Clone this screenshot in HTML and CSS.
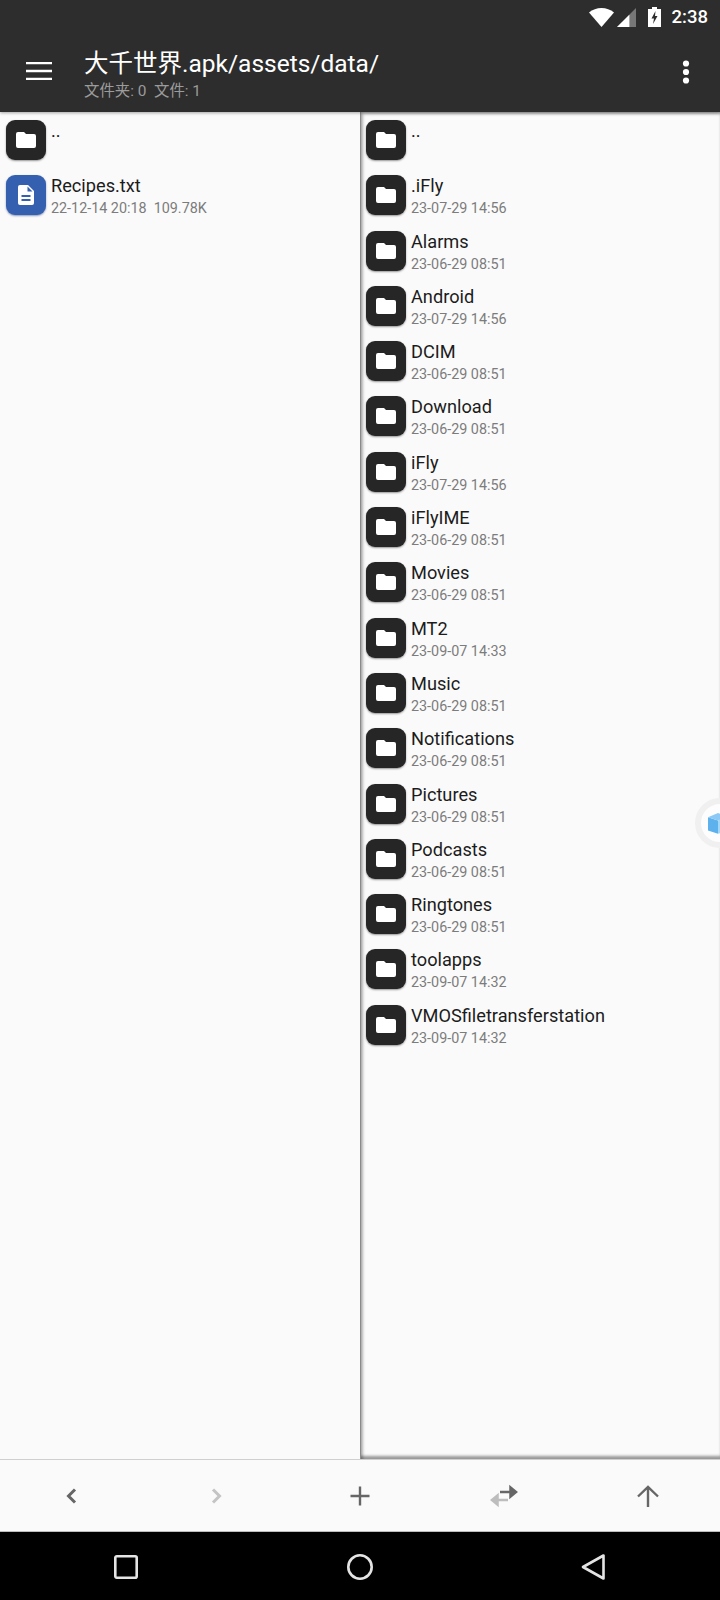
FILE: index.html
```html
<!DOCTYPE html>
<html lang="zh">
<head>
<meta charset="utf-8">
<title>大千世界.apk/assets/data/</title>
<link rel="stylesheet" href="styles.css">
</head>
<body>
<svg class="defs" width="0" height="0" aria-hidden="true">
  <symbol id="folder" viewBox="0 0 20 16"><path d="M2 0h6l2 2h8a2 2 0 0 1 2 2v10a2 2 0 0 1-2 2H2a2 2 0 0 1-2-2V2a2 2 0 0 1 2-2z"/></symbol>
</svg>
<div class="app">
  <header class="topbar">
    <div class="status">
      <svg class="st-wifi" viewBox="0 0 25 19"><path d="M12.500 19 0 4.500C3.500 1.600 7.800 0 12.500 0s9 1.600 12.500 4.500z" fill="#fff"/></svg>
      <svg class="st-signal" viewBox="0 0 20 20"><path d="M0 20 20 0v20z" fill="#777"/><path d="M0 20 13 7v13z" fill="#fff"/></svg>
      <svg class="st-batt" viewBox="0 0 13 20"><path d="M4 0h5v2h4v18H0V2h4z" fill="#fff"/><path d="M7.500 4 3.500 11.500h2.500L5 17l4.500-8H7z" fill="#2d2d2d"/></svg>
      <span class="st-time">2:38</span>
    </div>
    <div class="toolbar">
      <svg class="menu" viewBox="0 0 26 18"><path d="M0 1h26M0 9h26M0 17h26" stroke="#fff" stroke-width="2.400" fill="none"/></svg>
      <div class="titles">
        <div class="title">大千世界.apk/assets/data/</div>
        <div class="subtitle">文件夹: 0&nbsp; 文件: 1</div>
      </div>
      <svg class="more" viewBox="0 0 8 24"><circle cx="4" cy="3.500" r="3.100" fill="#fff"/><circle cx="4" cy="12" r="3.100" fill="#fff"/><circle cx="4" cy="20.500" r="3.100" fill="#fff"/></svg>
    </div>
  </header>

  <main class="panes">
    <section class="pane pane-left">
      <div class="row"><span class="tile"><svg class="fold"><use href="#folder"/></svg></span><div class="info"><div class="name">..</div></div></div>
      <div class="row"><span class="tile tile-doc"><svg class="doc" viewBox="0 0 16 20"><path d="M2 0h8l6 6v12a2 2 0 0 1-2 2H2a2 2 0 0 1-2-2V2a2 2 0 0 1 2-2z" fill="#fff"/><path d="M9.500 1.500v5h5z" fill="#3560b0"/><path d="M3.500 11h9M3.500 15h9" stroke="#3560b0" stroke-width="1.800"/></svg></span><div class="info"><div class="name">Recipes.txt</div><div class="meta">22-12-14 20:18&nbsp; 109.78K</div></div></div>
    </section>
    <section class="pane pane-right">
      <div class="row"><span class="tile"><svg class="fold"><use href="#folder"/></svg></span><div class="info"><div class="name">..</div></div></div>
      <div class="row"><span class="tile"><svg class="fold"><use href="#folder"/></svg></span><div class="info"><div class="name">.iFly</div><div class="meta">23-07-29 14:56</div></div></div>
      <div class="row"><span class="tile"><svg class="fold"><use href="#folder"/></svg></span><div class="info"><div class="name">Alarms</div><div class="meta">23-06-29 08:51</div></div></div>
      <div class="row"><span class="tile"><svg class="fold"><use href="#folder"/></svg></span><div class="info"><div class="name">Android</div><div class="meta">23-07-29 14:56</div></div></div>
      <div class="row"><span class="tile"><svg class="fold"><use href="#folder"/></svg></span><div class="info"><div class="name">DCIM</div><div class="meta">23-06-29 08:51</div></div></div>
      <div class="row"><span class="tile"><svg class="fold"><use href="#folder"/></svg></span><div class="info"><div class="name">Download</div><div class="meta">23-06-29 08:51</div></div></div>
      <div class="row"><span class="tile"><svg class="fold"><use href="#folder"/></svg></span><div class="info"><div class="name">iFly</div><div class="meta">23-07-29 14:56</div></div></div>
      <div class="row"><span class="tile"><svg class="fold"><use href="#folder"/></svg></span><div class="info"><div class="name">iFlyIME</div><div class="meta">23-06-29 08:51</div></div></div>
      <div class="row"><span class="tile"><svg class="fold"><use href="#folder"/></svg></span><div class="info"><div class="name">Movies</div><div class="meta">23-06-29 08:51</div></div></div>
      <div class="row"><span class="tile"><svg class="fold"><use href="#folder"/></svg></span><div class="info"><div class="name">MT2</div><div class="meta">23-09-07 14:33</div></div></div>
      <div class="row"><span class="tile"><svg class="fold"><use href="#folder"/></svg></span><div class="info"><div class="name">Music</div><div class="meta">23-06-29 08:51</div></div></div>
      <div class="row"><span class="tile"><svg class="fold"><use href="#folder"/></svg></span><div class="info"><div class="name">Notifications</div><div class="meta">23-06-29 08:51</div></div></div>
      <div class="row"><span class="tile"><svg class="fold"><use href="#folder"/></svg></span><div class="info"><div class="name">Pictures</div><div class="meta">23-06-29 08:51</div></div></div>
      <div class="row"><span class="tile"><svg class="fold"><use href="#folder"/></svg></span><div class="info"><div class="name">Podcasts</div><div class="meta">23-06-29 08:51</div></div></div>
      <div class="row"><span class="tile"><svg class="fold"><use href="#folder"/></svg></span><div class="info"><div class="name">Ringtones</div><div class="meta">23-06-29 08:51</div></div></div>
      <div class="row"><span class="tile"><svg class="fold"><use href="#folder"/></svg></span><div class="info"><div class="name">toolapps</div><div class="meta">23-09-07 14:32</div></div></div>
      <div class="row"><span class="tile"><svg class="fold"><use href="#folder"/></svg></span><div class="info"><div class="name">VMOSfiletransferstation</div><div class="meta">23-09-07 14:32</div></div></div>
    </section>
    <div class="float-ball">
      <svg class="cube" viewBox="0 0 24 26"><path d="M0 6 12 10v16L0 22z" fill="#5db2ee"/><path d="M12 10 24 6v16l-12 4z" fill="#a5d8f8"/><path d="M0 6 12 1l12 5-12 4z" fill="#8ccaf5"/></svg>
    </div>
  </main>

  <nav class="actions">
    <span class="act"><svg viewBox="0 0 24 24"><path d="M15 5.500 8.500 12l6.500 6.500" class="ico"/></svg></span>
    <span class="act"><svg viewBox="0 0 24 24"><path d="M9 5.500 15.500 12 9 18.500" class="ico dim"/></svg></span>
    <span class="act"><svg viewBox="0 0 24 24"><path d="M12 2.500v19M2.500 12h19" class="ico thin"/></svg></span>
    <span class="act"><svg class="wide" viewBox="0 0 30 24"><path d="M11 8h16M21.500 3.500 27 8l-5.500 4.500v-9z" class="ico-arrow"/><path d="M19 16H3M8.500 11.500 3 16l5.500 4.500v-9z" class="ico-arrow dimf"/></svg></span>
    <span class="act"><svg viewBox="0 0 24 24"><path d="M12 23V3M2 12.500 12 3l10 9.500" class="ico thin"/></svg></span>
  </nav>

  <footer class="navbar">
    <span class="nav"><svg viewBox="0 0 26 26"><rect x="2.300" y="2.300" width="21.400" height="21.400" rx="1.500" class="nv"/></svg></span>
    <span class="nav"><svg viewBox="0 0 26 26"><circle cx="13" cy="13" r="11.700" class="nv"/></svg></span>
    <span class="nav"><svg viewBox="0 0 26 26"><path d="M22.500 1.500v23L2 13z" class="nv"/></svg></span>
  </footer>
</div>
</body>
</html>
```
FILE: styles.css
```css
* { box-sizing: border-box; }
html, body { margin: 0; padding: 0; }
body {
  width: 720px;
  height: 1600px;
  overflow: hidden;
  font-family: Roboto, "Noto Sans CJK SC", sans-serif;
  background: #fafafa;
}
.defs { position: absolute; }
.app { display: flex; flex-direction: column; height: 1600px; }

.topbar {
  flex: 0 0 112px;
  background: #2d2d2d;
  display: flex;
  flex-direction: column;
  color: #fff;
  position: relative;
  z-index: 2;
  box-shadow: 0 1px 3px rgba(0, 0, 0, .35);
}
.status {
  height: 34px;
  display: flex;
  align-items: center;
  justify-content: flex-end;
  padding: 0 12px 0 0;
}
.st-wifi { width: 25px; height: 19px; }
.st-signal { width: 19px; height: 19px; margin-left: 3px; }
.st-batt { width: 13px; height: 20px; margin: 0 11px 0 12px; }
.st-time { font-size: 18.500px; line-height: 20px; font-weight: 500; }

.toolbar {
  flex: 1;
  display: flex;
  align-items: flex-start;
  position: relative;
}
.menu { width: 26px; height: 18px; margin: 28px 0 0 26px; flex: none; }
.titles { margin-left: 32px; flex: 1; }
.title { font-size: 24.500px; line-height: 30px; margin-top: 15px; white-space: nowrap; }
.subtitle { font-size: 15.400px; line-height: 18px; color: #9b9b9b; margin-top: 3px; white-space: nowrap; }
.more { width: 8px; height: 24px; margin: 26px 30px 0 0; flex: none; }

.panes {
  flex: 0 0 1347px;
  display: flex;
  position: relative;
  overflow: hidden;
}
.pane { padding-top: 8px; }
.pane-left { flex: 0 0 360px; background: #fafafa; }
.pane-right {
  flex: 1;
  background: #fafafa;
  border-left: 1px solid #8a8a8a;
  box-shadow: inset 3px 3px 3px -1px rgba(0, 0, 0, .28), inset 0 -4px 3px -1px rgba(0, 0, 0, .4);
}
.row { height: 55.300px; display: flex; align-items: flex-start; }
.pane-left .row { padding-left: 6px; }
.pane-right .row { padding-left: 5px; }
.tile {
  flex: none;
  width: 40px;
  height: 40px;
  border-radius: 9px;
  background: #262626;
  box-shadow: 0 1px 2px rgba(0, 0, 0, .4);
  display: flex;
  align-items: center;
  justify-content: center;
}
.tile-doc { background: #3560b0; box-shadow: 0 1px 2px rgba(30, 60, 130, .5); }
.fold { width: 20px; height: 16px; fill: #fff; }
.doc { width: 16px; height: 20px; }
.info { margin-left: 5px; min-width: 0; }
.name { font-size: 18.200px; line-height: 22px; color: #1c1c1c; white-space: nowrap; }
.meta { font-size: 14.350px; line-height: 18px; color: #7c7c7c; margin-top: 3px; white-space: nowrap; }

.float-ball {
  position: absolute;
  left: 695px;
  top: 686px;
  width: 50px;
  height: 50px;
  border-radius: 50%;
  background: #fdfdfd;
  border: 6px solid #f0f0f0;
  display: flex;
  align-items: center;
  padding-left: 7px;
}
.cube { width: 20px; height: 22px; flex: none; }

.actions {
  flex: 0 0 73px;
  display: flex;
  align-items: center;
  justify-content: space-around;
  background: #fafafa;
  border-top: 1px solid #cfcfcf;
  border-bottom: 1px solid #bdbdbd;
}
.act { flex: 1; display: flex; justify-content: center; }
.act svg { width: 24px; height: 24px; display: block; }
.act svg.wide { width: 30px; height: 24px; }
.ico { stroke: #666; stroke-width: 3; fill: none; }
.ico.dim { stroke: #c4c4c4; }
.ico.thin { stroke-width: 2.400; }
.ico-arrow { stroke: #666; stroke-width: 2.500; fill: #666; }
.ico-arrow.dimf { stroke: #bdbdbd; fill: #bdbdbd; }

.navbar {
  flex: 0 0 68px;
  background: #000;
  display: flex;
  align-items: center;
  justify-content: center;
  padding-top: 2px;
}
.nav { width: 234px; display: flex; justify-content: center; }
.nav svg { width: 26px; height: 26px; display: block; }
.nv { fill: none; stroke: #e4e4e4; stroke-width: 2.600; stroke-linejoin: round; }
```
